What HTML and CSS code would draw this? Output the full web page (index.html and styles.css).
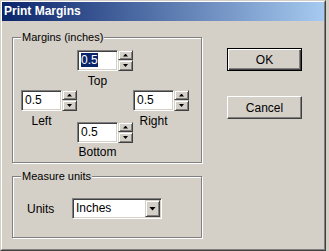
FILE: index.html
```html
<!DOCTYPE html>
<html lang="en">
<head>
    <meta charset="UTF-8">
    <meta name="viewport" content="width=device-width, initial-scale=1.0">
    <title>Print Margins</title>
    <link rel="stylesheet" href="styles.css">
</head>
<body>
    <div class="window">
        <div class="window-inner">
            <div class="titlebar">Print Margins</div>
            <div class="client">
                <div class="groups">
                    <fieldset class="group margins">
                        <legend>Margins (inches)</legend>
                        <div class="spinners">
                            <div class="col col-side">
                                <div class="spinner">
                                    <div class="edit">0.5</div>
                                    <div class="spin"><span class="spin-btn up"></span><span class="spin-btn down"></span></div>
                                </div>
                                <div class="caption">Left</div>
                            </div>
                            <div class="col col-mid">
                                <div class="spinner">
                                    <div class="edit"><span class="sel">0.5</span></div>
                                    <div class="spin"><span class="spin-btn up"></span><span class="spin-btn down"></span></div>
                                </div>
                                <div class="caption">Top</div>
                                <div class="spinner bottom">
                                    <div class="edit">0.5</div>
                                    <div class="spin"><span class="spin-btn up"></span><span class="spin-btn down"></span></div>
                                </div>
                                <div class="caption caption-bottom">Bottom</div>
                            </div>
                            <div class="col col-side">
                                <div class="spinner">
                                    <div class="edit">0.5</div>
                                    <div class="spin"><span class="spin-btn up"></span><span class="spin-btn down"></span></div>
                                </div>
                                <div class="caption">Right</div>
                            </div>
                        </div>
                    </fieldset>
                    <fieldset class="group units">
                        <legend>Measure units</legend>
                        <div class="units-row">
                            <span class="units-label">Units</span>
                            <div class="combo">
                                <span class="combo-text">Inches</span>
                                <span class="combo-btn"></span>
                            </div>
                        </div>
                    </fieldset>
                </div>
                <div class="buttons">
                    <button class="btn btn-default">OK</button>
                    <button class="btn btn-cancel">Cancel</button>
                </div>
            </div>
        </div>
    </div>
</body>
</html>
```
FILE: styles.css
```css
html, body {
    margin: 0;
    background-color: #d4d0c8;
}
body {
    font-family: "Liberation Sans", Arial, sans-serif;
    font-size: 11px;
    color: #000;
}
.window {
    width: 326px;
    height: 251px;
    box-sizing: border-box;
    border: 1px solid;
    border-color: #d4d0c8 #404040 #404040 #d4d0c8;
}
.window-inner {
    height: 100%;
    box-sizing: border-box;
    border: 1px solid;
    border-color: #fff #808080 #808080 #fff;
}
.titlebar {
    height: 19px;
    line-height: 19px;
    padding-left: 2px;
    font-size: 12px;
    font-weight: bold;
    color: #fff;
    background: linear-gradient(to right, #0a246a, #a6caf0);
}
.client {
    display: flex;
    padding: 10px 0 0 10px;
}
.group {
    margin: 0;
    padding: 0 0 0 8px;
    width: 190px;
    box-sizing: border-box;
    border: 1px solid #808080;
    box-shadow: inset 1px 1px 0 #fff, 1px 1px 0 #fff;
}
.group legend {
    padding: 0 1px;
    line-height: 13px;
    background-color: #d4d0c8;
}
.margins {
    height: 132px;
}
.units {
    margin-top: 7px;
    height: 68px;
}
.spinners {
    display: flex;
    padding-top: 6px;
}
.col {
    width: 56px;
    display: flex;
    flex-direction: column;
}
.col-side {
    margin-top: 40px;
}
.spinner {
    display: flex;
    height: 21px;
}
.spinner.bottom {
    margin-top: 34px;
}
.edit {
    width: 41px;
    box-sizing: border-box;
    border: 1px solid;
    border-color: #808080 #fff #fff #808080;
    box-shadow: inset 1px 1px 0 #404040, inset -1px -1px 0 #d4d0c8;
    background-color: #fff;
    padding: 0 3px;
    line-height: 19px;
    font-size: 12px;
}
.sel {
    background-color: #0a246a;
    color: #fff;
}
.spin {
    width: 15px;
    display: flex;
    flex-direction: column;
}
.spin-btn {
    box-sizing: border-box;
    height: 10px;
    display: flex;
    align-items: center;
    justify-content: center;
    background-color: #d4d0c8;
    border: 1px solid;
    border-color: #d4d0c8 #404040 #404040 #d4d0c8;
    box-shadow: inset 1px 1px 0 #fff, inset -1px -1px 0 #808080;
}
.spin-btn.down {
    height: 11px;
}
.spin-btn::after {
    content: "";
    width: 5px;
    height: 3px;
    background-color: #000;
    clip-path: polygon(50% 0, 100% 100%, 0 100%);
}
.spin-btn.down::after {
    clip-path: polygon(0 0, 100% 0, 50% 100%);
}
.caption {
    width: 41px;
    text-align: center;
    line-height: 13px;
    margin-top: 4px;
    font-size: 12px;
}
.caption-bottom {
    margin-top: 3px;
}
.units-row {
    display: flex;
    align-items: center;
    margin: 15px 0 0 6px;
}
.units-label {
    width: 45px;
    font-size: 12px;
}
.combo {
    width: 90px;
    height: 21px;
    box-sizing: border-box;
    display: flex;
    padding: 1px;
    border: 1px solid;
    border-color: #808080 #fff #fff #808080;
    box-shadow: inset 1px 1px 0 #404040, inset -1px -1px 0 #d4d0c8;
    background-color: #fff;
}
.combo-text {
    flex: 1;
    padding-left: 2px;
    line-height: 17px;
    font-size: 12px;
}
.combo-btn {
    width: 15px;
    box-sizing: border-box;
    display: flex;
    align-items: center;
    justify-content: center;
    background-color: #d4d0c8;
    border: 1px solid;
    border-color: #d4d0c8 #404040 #404040 #d4d0c8;
    box-shadow: inset 1px 1px 0 #fff, inset -1px -1px 0 #808080;
}
.combo-btn::after {
    content: "";
    width: 7px;
    height: 4px;
    background-color: #000;
    clip-path: polygon(0 0, 100% 0, 50% 100%);
}
.buttons {
    display: flex;
    flex-direction: column;
    margin: 17px 0 0 25px;
}
.btn {
    width: 75px;
    height: 23px;
    padding: 0;
    font-family: inherit;
    font-size: 12px;
    color: #000;
    background-color: #d4d0c8;
    border: 1px solid;
    border-color: #fff #404040 #404040 #fff;
    box-shadow: inset -1px -1px 0 #808080;
}
.btn-default {
    border-color: #000;
    box-shadow: inset 1px 1px 0 #fff, inset -1px -1px 0 #404040, inset -2px -2px 0 #808080;
}
.btn-cancel {
    margin-top: 25px;
}
```
